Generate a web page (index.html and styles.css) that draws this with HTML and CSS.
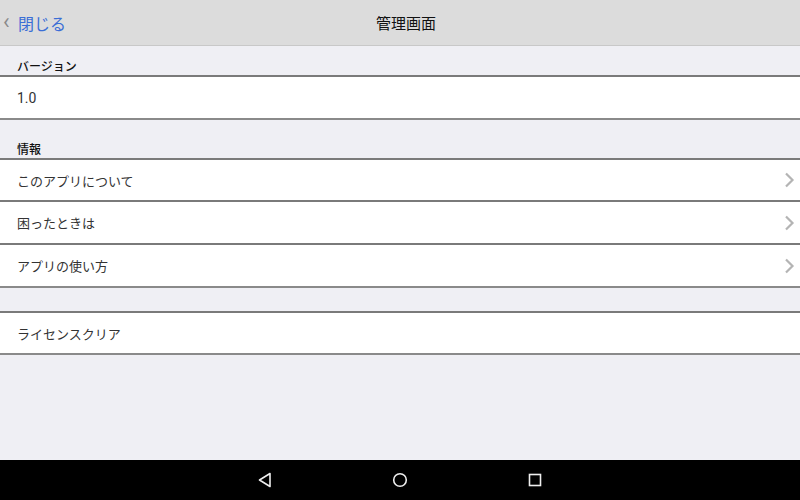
FILE: index.html
```html
<!DOCTYPE html>
<html lang="ja">
  <head>
    <meta charset="UTF-8" />
    <title>管理画面</title>
    <link rel="stylesheet" href="styles.css">
  </head>
  <body>
    <div class="screen">
      <div class="header">
        <a class="back" href="#"><span class="back-arrow">‹</span>閉じる</a>
        <div class="title">管理画面</div>
      </div>
      <div class="content">
        <div class="section-title first">バージョン</div>
        <ul class="group">
          <li class="row number">1.0</li>
        </ul>
        <div class="section-title second">情報</div>
        <ul class="group">
          <li class="row link">このアプリについて
            <svg class="chev" width="12" height="18" viewBox="0 0 12 18"><path d="M3 2.5 L9.5 9 L3 15.5" fill="none" stroke="#b4b4b4" stroke-width="2.2"/></svg>
          </li>
          <li class="row link">困ったときは
            <svg class="chev" width="12" height="18" viewBox="0 0 12 18"><path d="M3 2.5 L9.5 9 L3 15.5" fill="none" stroke="#b4b4b4" stroke-width="2.2"/></svg>
          </li>
          <li class="row link">アプリの使い方
            <svg class="chev" width="12" height="18" viewBox="0 0 12 18"><path d="M3 2.5 L9.5 9 L3 15.5" fill="none" stroke="#b4b4b4" stroke-width="2.2"/></svg>
          </li>
        </ul>
        <div class="spacer"></div>
        <ul class="group">
          <li class="row">ライセンスクリア</li>
        </ul>
      </div>
      <div class="navbar">
        <svg width="16" height="16" viewBox="0 0 16 16"><path d="M13 1.5 L2.5 8 L13 14.5 Z" fill="none" stroke="#eee" stroke-width="1.6" stroke-linejoin="round"/></svg>
        <svg width="16" height="16" viewBox="0 0 16 16"><circle cx="8" cy="8" r="6.3" fill="none" stroke="#eee" stroke-width="1.6"/></svg>
        <svg width="16" height="16" viewBox="0 0 16 16"><rect x="2.5" y="2.5" width="11" height="11" fill="none" stroke="#eee" stroke-width="1.6"/></svg>
      </div>
    </div>
  </body>
</html>
```
FILE: styles.css
```css
* {
  margin: 0;
  padding: 0;
  box-sizing: border-box;
}
body {
  font-family: Roboto, "Noto Sans CJK JP", sans-serif;
  color: #222;
}
.screen {
  width: 800px;
  height: 500px;
  display: flex;
  flex-direction: column;
  background-color: #efeff4;
}
.header {
  height: 46px;
  background-color: #dcdcdc;
  border-bottom: 1px solid #c8c8c8;
  display: flex;
  align-items: center;
  position: relative;
}
.back {
  display: flex;
  align-items: center;
  color: #3b6ed6;
  text-decoration: none;
  font-size: 16px;
  padding-left: 3px;
}
.back-arrow {
  color: #8a8a8a;
  font-size: 22px;
  width: 15px;
  margin-top: -3px;
}
.title {
  position: absolute;
  left: 12px;
  right: 0;
  text-align: center;
  font-size: 15px;
  color: #111;
  pointer-events: none;
}
.content {
  flex: 1;
}
.section-title {
  font-size: 12px;
  font-weight: 500;
  color: #111;
  padding-left: 17px;
  display: flex;
  align-items: flex-end;
  padding-bottom: 1px;
}
.section-title.first {
  height: 29px;
}
.section-title.second {
  height: 38px;
}
.spacer {
  height: 23px;
}
.group {
  list-style: none;
  background-color: #fff;
  border-top: 2px solid #7a7a7a;
  border-bottom: 2px solid #8a8a8a;
}
.row {
  height: 40px;
  display: flex;
  align-items: center;
  justify-content: space-between;
  padding-left: 17px;
  padding-right: 5px;
  font-size: 13px;
  color: #333;
}
.row + .row {
  height: 43px;
  border-top: 2px solid #7a7a7a;
}
.row.number {
  height: 41px;
  font-size: 14px;
}
.chev {
  display: block;
}
.navbar {
  height: 40px;
  background-color: #000;
  display: flex;
  justify-content: center;
  align-items: center;
  gap: 119px;
}
```
